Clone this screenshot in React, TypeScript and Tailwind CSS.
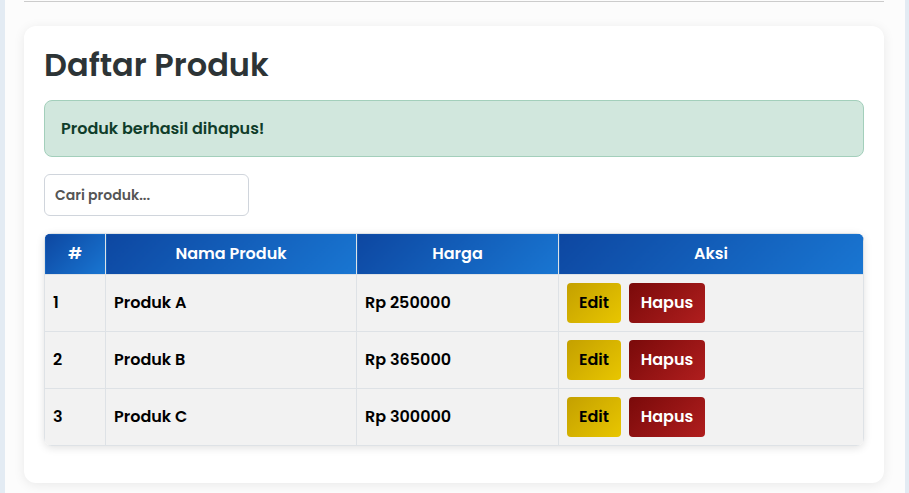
const products = [
  { id: 1, name: "Produk A", price: 250000 },
  { id: 2, name: "Produk B", price: 365000 },
  { id: 3, name: "Produk C", price: 300000 },
];

const thClass =
  "border border-[#dee2e6] bg-[linear-gradient(135deg,#0d47a1,#1976d2)] py-2.5 px-2 text-center text-base leading-5 font-semibold text-white";

const ProductListPage = () => {
  return (
    <div className="min-h-screen bg-[#e3ebf3] font-['Poppins','Inter',sans-serif]">
      <div className="mx-auto max-w-[900px] bg-[#fcfcfc] pt-px pr-[20.5px] pb-[11px] pl-[19.5px]">
        <hr className="border-0 border-t border-[#cccccc]" />

        <div className="mt-6 rounded-xl bg-white p-5 shadow-[0_2px_12px_rgba(0,0,0,0.08)]">
          <h2 className="mb-4 text-[32px] leading-[1.2] font-semibold text-[#2d3436]">
            Daftar Produk
          </h2>

          <div className="mb-[17px] rounded-lg border border-[#a3cfbb] bg-[#d1e7dd] px-4 py-4 text-base leading-[23px] font-semibold text-[#0f3d2a]">
            Produk berhasil dihapus!
          </div>

          <input
            type="text"
            placeholder="Cari produk..."
            className="mb-[17px] block h-[42px] w-[205px] rounded-md border border-[#d0d5dc] px-2.5 text-sm font-semibold text-[#333] outline-none placeholder:text-[#555]"
          />

          <div className="mb-[17px] overflow-hidden rounded-lg shadow-[0_2px_8px_rgba(0,0,0,0.12)]">
            <table className="w-full table-fixed border-collapse">
              <colgroup>
                <col className="w-[61px]" />
                <col className="w-[251px]" />
                <col className="w-[202px]" />
                <col />
              </colgroup>
              <thead>
                <tr>
                  <th className={thClass}>#</th>
                  <th className={thClass}>Nama Produk</th>
                  <th className={thClass}>Harga</th>
                  <th className={thClass}>Aksi</th>
                </tr>
              </thead>
              <tbody className="odd:[&>tr]:bg-[#f2f2f2] even:[&>tr]:bg-white">
                {products.map((p) => (
                  <tr
                    key={p.id}
                    className="text-base leading-6 font-semibold text-black [&>td]:border [&>td]:border-[#dee2e6] [&>td]:px-2 [&>td]:py-2"
                  >
                    <td>{p.id}</td>
                    <td>{p.name}</td>
                    <td>Rp {p.price}</td>
                    <td>
                      <div className="flex gap-2">
                        <button className="h-10 w-[54px] rounded bg-[linear-gradient(135deg,#c4a000,#e8c600)] text-base font-semibold text-black">
                          Edit
                        </button>
                        <button className="h-10 w-[76px] rounded bg-[linear-gradient(135deg,#7a0a0a,#b01e1e)] text-base font-semibold text-white">
                          Hapus
                        </button>
                      </div>
                    </td>
                  </tr>
                ))}
              </tbody>
            </table>
          </div>
        </div>
      </div>
    </div>
  );
};

export default ProductListPage;
